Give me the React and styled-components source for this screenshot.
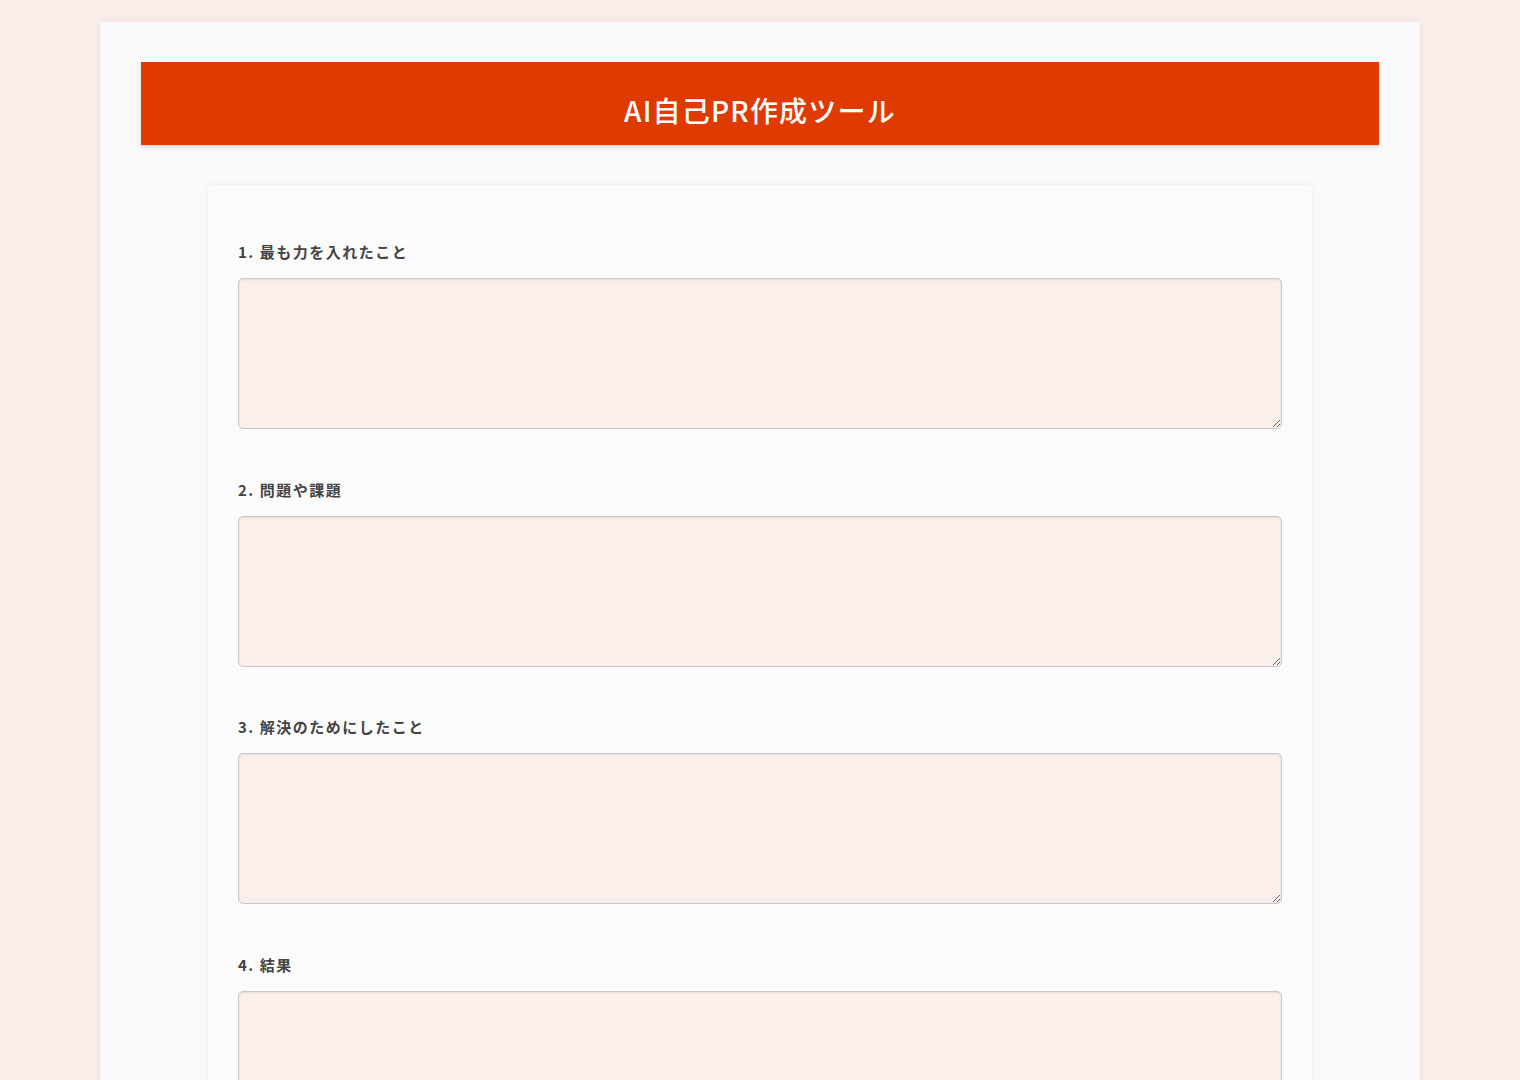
import React, { useState } from "react";
import styled, { createGlobalStyle } from "styled-components";

const GlobalStyle = createGlobalStyle`
  html, body {
    margin: 0;
    padding: 0;
    background-color: #f9ede9;
    font-family: "Noto Sans CJK JP", "Noto Sans", sans-serif;
  }
  * { box-sizing: border-box; }
`;

const campos = [
  { id: "effort", rotulo: "1. 最も力を入れたこと" },
  { id: "problem", rotulo: "2. 問題や課題" },
  { id: "action", rotulo: "3. 解決のためにしたこと" },
  { id: "result", rotulo: "4. 結果" },
];

function App() {
  const [valores, setValores] = useState({});

  const alterar = (id) => (e) => setValores({ ...valores, [id]: e.target.value });

  return (
    <>
      <GlobalStyle />
      <Pagina>
        <Cabecalho>
          <Titulo>AI自己PR作成ツール</Titulo>
        </Cabecalho>
        <Formulario onSubmit={(e) => e.preventDefault()}>
          {campos.map((campo) => (
            <Campo key={campo.id}>
              <Rotulo htmlFor={campo.id}>{campo.rotulo}</Rotulo>
              <AreaTexto
                id={campo.id}
                value={valores[campo.id] || ""}
                onChange={alterar(campo.id)}
              />
            </Campo>
          ))}
        </Formulario>
      </Pagina>
    </>
  );
}

export default App;

// ESTILOS

const Pagina = styled.div`
  width: 1320px;
  margin: 22px auto 0;
  padding: 40px 41px 60px;
  background-color: #fafafa;
  box-shadow: 0 0 6px rgba(120, 80, 70, 0.12);
  min-height: 1100px;
`;

const Cabecalho = styled.header`
  height: 83px;
  background-color: #df3a02;
  display: flex;
  align-items: center;
  justify-content: center;
  box-shadow: 0 2px 4px rgba(0, 0, 0, 0.15);
`;

const Titulo = styled.h1`
  margin: 0;
  padding-top: 12px;
  color: #ffffff;
  font-size: 28px;
  font-weight: 500;
  letter-spacing: 1.2px;
`;

const Formulario = styled.form`
  width: 1104px;
  margin: 40px auto 0;
  padding: 56px 30px 30px;
  background-color: #fbfbfb;
  box-shadow: 0 0 6px rgba(0, 0, 0, 0.06);
  display: flex;
  flex-direction: column;
  gap: 49.6px;
`;

const Campo = styled.div`
  display: flex;
  flex-direction: column;
  gap: 15px;
`;

const Rotulo = styled.label`
  font-size: 15px;
  line-height: 22px;
  font-weight: 700;
  letter-spacing: 1.5px;
  color: #444444;
`;

const AreaTexto = styled.textarea`
  width: 100%;
  height: 151px;
  background-color: #fbefeb;
  border: 1px solid #c8c8c8;
  border-radius: 5px;
  box-shadow: inset 0 1px 2px rgba(0, 0, 0, 0.08);
  padding: 10px;
  font-family: inherit;
  font-size: 15px;
  color: #333333;
  resize: vertical;
  outline: none;

  &:focus {
    border-color: #df3a02;
  }
`;
